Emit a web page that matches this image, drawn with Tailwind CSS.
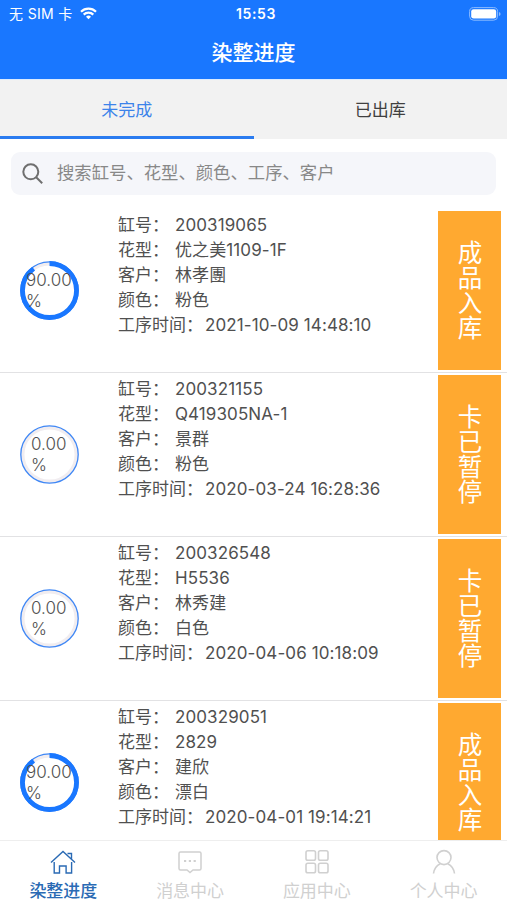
<!DOCTYPE html>
<html lang="zh-CN">
<head>
<meta charset="utf-8">
<title>染整进度</title>
<script src="https://cdn.jsdelivr.net/npm/@tailwindcss/browser@4"></script>
</head>
<body class="bg-white">
<div class="flex h-[900px] w-[507px] flex-col overflow-hidden bg-white font-['Inter','Noto_Sans_CJK_SC',sans-serif] text-[#505050]">
  <header class="h-[79px] shrink-0 bg-[#1977ff] text-white">
    <div class="grid h-[27px] grid-cols-3 items-center pl-[9px] pr-[6px]">
      <div class="flex items-center gap-[7px] text-[14px] whitespace-nowrap">
        <span class="tracking-[0.35px]">无 SIM 卡</span>
        <svg class="h-[13px] w-[17px]" viewBox="0 0 17 13" fill="none" stroke="currentColor" stroke-width="2.2"><path d="M1 4.800a10.600 10.600 0 0 1 15 0M3.700 7.600a6.800 6.800 0 0 1 9.600 0"/><path d="M8.500 12.300 6 9.800a3.500 3.500 0 0 1 5 0Z" fill="currentColor" stroke="none"/></svg>
      </div>
      <div class="pl-[2px] text-center text-[14px] font-semibold tracking-[0.6px]">15:53</div>
      <svg class="h-[14px] w-[32px] justify-self-end" viewBox="0 0 32 14"><rect x=".6" y=".6" width="28" height="12.600" rx="4" fill="none" stroke="#8cbbff" stroke-width="1"/><rect x="2.200" y="2.200" width="25" height="9.400" rx="2.400" fill="#fff"/><path d="M30 5v4q1.600-.6 1.600-2T30 5Z" fill="#8cbbff"/></svg>
    </div>
    <h1 class="flex h-[51px] items-center justify-center pt-px text-[21px] font-medium">染整进度</h1>
  </header>
  <nav class="grid h-[60px] shrink-0 grid-cols-2 border-t border-[#dcebff] bg-[#f2f2f2] text-[17px]">
    <div class="flex items-center justify-center border-b-[3px] border-[#2b7cf0] pt-[5px] text-[#3c83ea]">未完成</div>
    <div class="flex items-center justify-center pb-[3px] pt-[5px] text-[#404040]">已出库</div>
  </nav>
  <div class="mx-[11px] mt-[13px] flex h-[43px] shrink-0 items-center gap-[14px] rounded-[9px] bg-[#f5f6fa] pl-[11px] text-[17.350px] text-[#888]">
    <svg class="h-[21px] w-[21px]" viewBox="0 0 21 21" fill="none" stroke="#6f6f6f" stroke-width="2"><circle cx="8.800" cy="8.800" r="7.500"/><path d="m14.200 14.200 6 6"/></svg>
    <span>搜索缸号、花型、颜色、工序、客户</span>
  </div>
  <main id="list" class="mt-[14px] min-h-0 flex-1 overflow-hidden"></main>
  <footer class="grid h-[60px] shrink-0 grid-cols-4 border-t border-[#eeeeee] bg-white text-[17px] text-[#d0d0d0]">
    <div class="flex flex-col items-center pt-[8px] font-medium text-[#2a6ab4]">
      <svg class="h-[26px] w-[26px]" viewBox="0 0 26 26" fill="none" stroke="currentColor" stroke-width="1.400"><path d="M1 13.500 13 2.500l12 11M17.500 4.500h4v5.700M4.200 13v11h5.300v-7h6.600v7h5.500V13"/></svg>
      <span class="mt-[7px] leading-[18px]">染整进度</span>
    </div>
    <div class="flex flex-col items-center pt-[8px]">
      <svg class="h-[26px] w-[26px]" viewBox="0 0 26 26" fill="none" stroke="currentColor" stroke-width="1.500"><path d="M3.500 3h19a1.500 1.500 0 0 1 1.500 1.500v15a1.500 1.500 0 0 1-1.500 1.500H16l-3 2.500-3-2.500H3.500A1.500 1.500 0 0 1 2 19.500v-15A1.500 1.500 0 0 1 3.500 3Z"/><path d="M7 12h2.200m2.600 0H14m2.600 0h2.200" stroke-width="2"/></svg>
      <span class="mt-[7px] leading-[18px]">消息中心</span>
    </div>
    <div class="flex flex-col items-center pt-[8px]">
      <svg class="h-[26px] w-[26px]" viewBox="0 0 26 26" fill="none" stroke="currentColor" stroke-width="1.600"><rect x="2" y="1.800" width="9.500" height="9.500" rx="1.800"/><rect x="14.500" y="1.800" width="9.500" height="9.500" rx="1.800"/><rect x="2" y="14.300" width="9.500" height="9.500" rx="1.800"/><rect x="14.500" y="14.300" width="9.500" height="9.500" rx="1.800"/></svg>
      <span class="mt-[7px] leading-[18px]">应用中心</span>
    </div>
    <div class="flex flex-col items-center pt-[8px]">
      <svg class="h-[26px] w-[26px]" viewBox="0 0 26 26" fill="none" stroke="currentColor" stroke-width="1.600"><circle cx="13" cy="8.600" r="7"/><path d="M2.500 24.500c.6-4.500 3-8 6.800-9.800M23.500 24.500c-.6-4.500-3-8-6.800-9.800"/></svg>
      <span class="mt-[7px] leading-[18px]">个人中心</span>
    </div>
  </footer>
</div>
<script>
const orders = [
  { no: '200319065', pattern: '优之美1109-1F', client: '林孝團', color: '粉色', time: '2021-10-09 14:48:10', pct: 90, state: '成品入库' },
  { no: '200321155', pattern: 'Q419305NA-1', client: '景群', color: '粉色', time: '2020-03-24 16:28:36', pct: 0, state: '卡已暂停' },
  { no: '200326548', pattern: 'H5536', client: '林秀建', color: '白色', time: '2020-04-06 10:18:09', pct: 0, state: '卡已暂停' },
  { no: '200329051', pattern: '2829', client: '建欣', color: '漂白', time: '2020-04-01 19:14:21', pct: 90, state: '成品入库' }
];
const field = (label, value) => `<div class="flex h-[25px] items-center whitespace-nowrap"><span class="w-[57px]">${label}：</span><span class="tracking-[0.1px]">${value}</span></div>`;
document.getElementById('list').innerHTML = orders.map(o => `
  <section class="flex h-[164px] border-b border-[#e2e2e4]">
    <div class="grid w-[118px] shrink-0 pl-[20px] pt-[52px]">
      <svg class="col-start-1 row-start-1 h-[59px] w-[59px]" viewBox="0 0 59 59" fill="none">
        <circle cx="29.500" cy="29.500" r="26.800" stroke="#f1edf0" stroke-width="3.500"/>
        <circle cx="29.500" cy="29.500" r="28.700" stroke="#3f87f5" stroke-width="1.300"/>
        ${o.pct ? `<circle cx="29.500" cy="29.500" r="27" stroke="#1977ff" stroke-width="4.800" pathLength="100" stroke-dasharray="${o.pct} 100" transform="rotate(-90 29.500 29.500)"/>` : ''}
      </svg>
      <div class="${o.pct ? 'pl-[6px]' : 'pl-[11px]'} z-10 col-start-1 row-start-1 pt-[9px] text-[17px] font-light leading-[21px]">${o.pct.toFixed(2)}<br>%</div>
    </div>
    <div class="flex-1 pt-[4px] text-[17px]">
      <div>${field('缸号', o.no)}${field('花型', o.pattern)}${field('客户', o.client)}${field('颜色', o.color)}</div>
      <div class="flex h-[25px] items-center whitespace-nowrap"><span class="w-[87px]">工序时间：</span><span class="tracking-[0.1px]">${o.time}</span></div>
    </div>
    <div class="mr-[6px] mt-[2px] flex h-[159px] w-[63px] items-center justify-center bg-[#ffa930] pr-[2px] text-[24.500px] text-white"><span class="leading-[30px] tracking-[0.700px] [writing-mode:vertical-rl]">${o.state}</span></div>
  </section>`).join('');
</script>
</body>
</html>
